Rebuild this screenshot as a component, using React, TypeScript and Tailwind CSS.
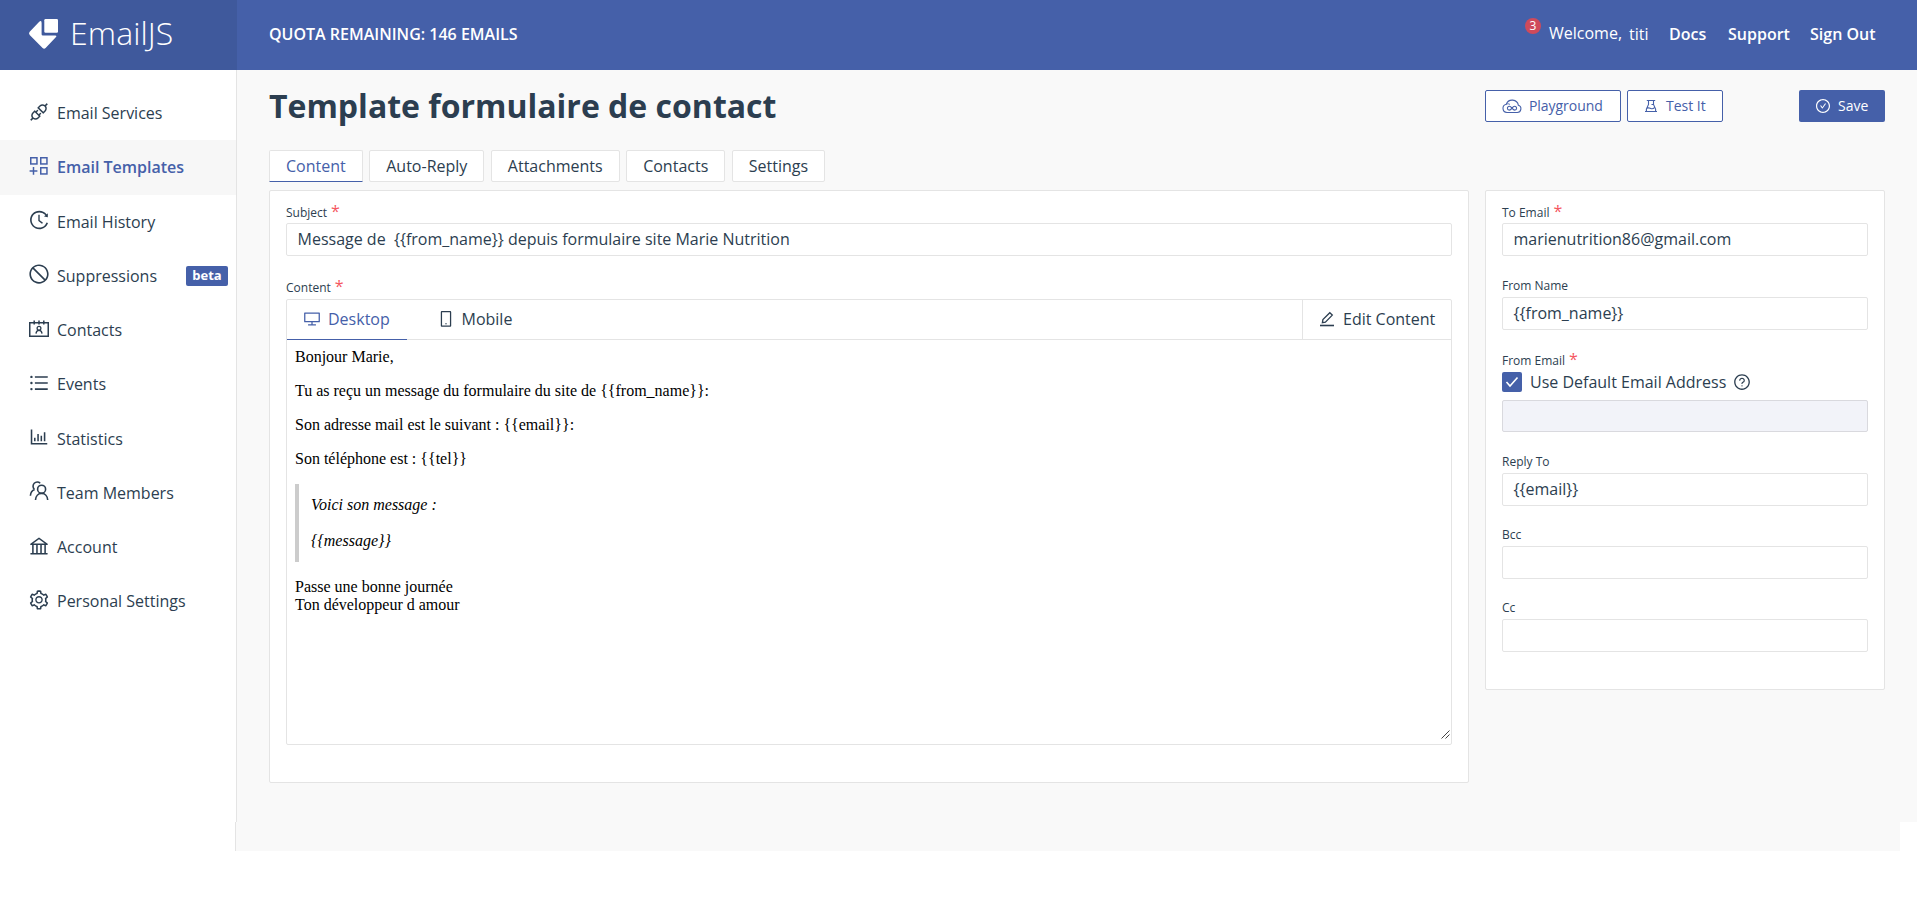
import type { ReactNode } from "react";
import {
  AiOutlineApi,
  AiOutlineBank,
  AiOutlineBarChart,
  AiOutlineCheckCircle,
  AiOutlineDesktop,
  AiOutlineHistory,
  AiOutlineMobile,
  AiOutlineQuestionCircle,
  AiOutlineSetting,
  AiOutlineStop,
  AiOutlineUnorderedList,
} from "react-icons/ai";

function TemplatesIcon() {
  return (
    <svg viewBox="0 0 22 22" width="22" height="22" fill="none" stroke="currentColor" strokeWidth="1.5">
      <rect x="2.75" y="2.75" width="6.2" height="6.2" />
      <rect x="12.75" y="2.75" width="6.2" height="6.2" />
      <rect x="12.75" y="12.75" width="6.2" height="6.2" />
      <path d="M5.5 12v7.8M1.6 15.9h7.8" />
    </svg>
  );
}

function ContactsIcon() {
  return (
    <svg viewBox="0 0 22 22" width="22" height="22" fill="none" stroke="currentColor" strokeWidth="1.5">
      <path d="M1.75 4.75h18.5v13.5H1.75z" />
      <path d="M6.2 2.5v4M11 2.5v4M15.8 2.5v4" />
      <circle cx="11" cy="10.3" r="1.9" strokeWidth="1.3" />
      <path d="M8 15.6c.1-2.1 1.3-3.3 3-3.3s2.9 1.2 3 3.3" strokeWidth="1.3" />
    </svg>
  );
}

function TeamIcon() {
  return (
    <svg viewBox="0 0 22 22" width="22" height="22" fill="none" stroke="currentColor" strokeWidth="1.6">
      <circle cx="13.6" cy="9.2" r="4" />
      <path d="M7.5 20c.2-4 2.7-6.6 6.1-6.6s5.9 2.6 6.1 6.6" />
      <path d="M12.2 3.2A4 4 0 1 0 6.3 9.2M2.4 15.8c.2-3.4 1.500-5.500 4.300-6.400" />
    </svg>
  );
}

function PlaygroundIcon() {
  return (
    <svg viewBox="0 0 20 16" width="20" height="16" fill="none" stroke="currentColor" strokeWidth="1.1">
      <path d="M5 14.500h10.200a3.700 3.700 0 0 0 1.200-7.200A6.300 6.300 0 0 0 4.300 6.200 4.200 4.200 0 0 0 5 14.500z" />
      <path d="M4.300 6.200C5.500 5.600 7 5.700 8 6.500" strokeWidth=".9" />
      <path d="M10 10.100c-1-1.300-1.800-1.800-2.700-1.800a1.900 1.900 0 0 0 0 3.800c.9 0 1.700-.6 2.700-2s1.800-1.800 2.700-1.800a1.900 1.900 0 0 1 0 3.800c-.9 0-1.700-.7-2.700-2z" />
    </svg>
  );
}

function FlaskIcon() {
  return (
    <svg viewBox="0 0 14 14" width="14" height="14" fill="none" stroke="currentColor" strokeWidth="1.1">
      <path d="M2.800 1.500h8.400M4.500 1.500v4L2.400 10v2.500M9.500 1.500v4L11.600 10v2.500M1 12.500h12M3.200 9.200c1.500-.9 2.400-.2 3.600.3s2.600.2 3.900-1.100M7.500 5.500h2" />
    </svg>
  );
}

function PenIcon() {
  return (
    <svg viewBox="0 0 16 16" width="16" height="16" fill="none" stroke="currentColor" strokeWidth="1.3">
      <path d="M1 14.500h14" strokeWidth="1.6" />
      <path d="M3.400 11.600l.5-3L10.800 1.700l2.500 2.400-6.900 7z" />
    </svg>
  );
}

function Logo() {
  return (
    <svg viewBox="0 0 30 32" width="30" height="32" fill="#fff">
      <path d="M17.500 1h11.300q1.200 0 1.200 1.200v11.300q0 1.200-1.200 1.200H17.500q-1.200 0-1.200-1.200V2.200q0-1.200 1.200-1.200z" />
      <path d="M13.600 5V16.200q0 1.300 1.300 1.300H27.400q1.800 0 .6 1.500L17.600 30q-1.500 1.400-3 0L1.700 17q-1.400-1.600 0-3.200L11 4q2.600-2.200 2.600 1z" />
    </svg>
  );
}

const navItems: { label: string; icon: ReactNode; active?: boolean; badge?: string }[] = [
  { label: "Email Services", icon: <AiOutlineApi size={22} /> },
  { label: "Email Templates", icon: <TemplatesIcon />, active: true },
  { label: "Email History", icon: <AiOutlineHistory size={22} /> },
  { label: "Suppressions", icon: <AiOutlineStop size={22} />, badge: "beta" },
  { label: "Contacts", icon: <ContactsIcon /> },
  { label: "Events", icon: <AiOutlineUnorderedList size={22} /> },
  { label: "Statistics", icon: <AiOutlineBarChart size={22} /> },
  { label: "Team Members", icon: <TeamIcon /> },
  { label: "Account", icon: <AiOutlineBank size={22} /> },
  { label: "Personal Settings", icon: <AiOutlineSetting size={22} /> },
];

const tabs = ["Content", "Auto-Reply", "Attachments", "Contacts", "Settings"];

function Label({ text, required }: { text: string; required?: boolean }) {
  return (
    <div className="flex h-[22px] text-[12px]">
      <span className={required ? "leading-6" : "leading-[22px]"}>{text}</span>
      {required && <span className="-mt-[1px] ml-1 text-[16px] leading-[22px] text-[#f5575f]">*</span>}
    </div>
  );
}

function TextBox({ value, disabled }: { value?: string; disabled?: boolean }) {
  return (
    <div
      className={
        disabled
          ? "h-8 rounded-[2px] border border-[#d9d9de] bg-[#f2f3f9]"
          : "h-[33px] rounded-[2px] border border-[#e4e4e4] bg-white px-[10.5px] text-[16px] leading-[31px] whitespace-pre"
      }
    >
      {value}
    </div>
  );
}

function Header() {
  return (
    <header className="flex h-[70px] shrink-0 bg-[#4560a9] text-white">
      <div className="flex w-[237px] bg-[#3f599c] pt-[18px] pl-7">
        <Logo />
        <span className="-mt-[7px] ml-3 text-[32px] leading-[44px] font-light tracking-[0.1px]">EmailJS</span>
      </div>
      <div className="flex flex-1 items-center pr-[42px] pb-[2px] pl-8 text-[16px]">
        <span className="flex-1 font-semibold">QUOTA REMAINING: 146 EMAILS</span>
        <span className="mr-2 mb-4 flex h-4 w-4 items-center justify-center rounded-full bg-[#cf4a5b] text-[12px] leading-none">
          3
        </span>
        <span className="mb-0.5 w-[80px]">Welcome,</span>
        <span className="w-[40px]">titi</span>
        <span className="w-[59px] font-semibold">Docs</span>
        <span className="w-[82px] font-semibold">Support</span>
        <span className="w-[65px] font-semibold whitespace-nowrap">Sign Out</span>
      </div>
    </header>
  );
}

function Sidebar() {
  return (
    <nav className="h-[752px] w-[237px] shrink-0 border-r border-[#e4e4e4] bg-white pt-4">
      {navItems.map((item) => (
        <div
          key={item.label}
          className={
            item.active
              ? "flex h-[54.25px] items-center bg-[#f7f7f7] pl-7 font-semibold text-[#4560a9]"
              : "flex h-[54.25px] items-center pl-7"
          }
        >
          <span className="mb-[3px]">{item.icon}</span>
          <span className="ml-[7px] flex-1">{item.label}</span>
          {item.badge && (
            <span className="mr-2 h-5 w-[42px] rounded-[2px] bg-[#4560a9] text-center text-[13px] leading-[19px] font-bold text-white">
              {item.badge}
            </span>
          )}
        </div>
      ))}
    </nav>
  );
}

function TitleBar() {
  return (
    <div className="flex h-[80px] pt-5 text-[14px] leading-[30px] text-[#4560a9]">
      <h1 className="-mt-[6px] flex-1 text-[32px] leading-[44px] font-bold text-[#2c3e50]">
        Template formulaire de contact
      </h1>
      <button className="mr-1.5 flex h-8 w-[136px] items-center rounded-[2px] border border-[#4560a9] bg-white pb-px pl-4">
        <PlaygroundIcon />
        <span className="ml-[7px] tracking-[-0.05px]">Playground</span>
      </button>
      <button className="mr-[76px] flex h-8 w-[96px] items-center rounded-[2px] border border-[#4560a9] bg-white pb-px pl-4">
        <FlaskIcon />
        <span className="ml-2">Test It</span>
      </button>
      <button className="flex h-8 w-[86px] items-center rounded-[2px] bg-[#4560a9] pb-px pl-4 text-white">
        <AiOutlineCheckCircle size={16} />
        <span className="ml-[7px]">Save</span>
      </button>
    </div>
  );
}

function Preview() {
  return (
    <div className="relative h-[404px] px-2 pt-2 font-['Liberation_Serif',serif] text-[16px] leading-[18px] text-black">
      <p className="mb-4">Bonjour Marie,</p>
      <p className="mb-4">Tu as reçu un message du formulaire du site de {"{{from_name}}"}:</p>
      <p className="mb-4">Son adresse mail est le suivant : {"{{email}}"}:</p>
      <p className="mb-4">Son téléphone est : {"{{tel}}"}</p>
      <blockquote className="mb-4 h-[78px] border-l-4 border-[#ccc] pt-3 pl-3 italic">
        <p className="mb-[18px]">Voici son message :</p>
        <p>{"{{message}}"}</p>
      </blockquote>
      <p>
        Passe une bonne journée
        <br />
        Ton développeur d amour
      </p>
      <svg className="absolute right-px bottom-[5px]" width="9" height="9" stroke="#444" strokeWidth="1">
        <path d="M.5 8.500l8-8M4.500 8.500l4-4" />
      </svg>
    </div>
  );
}

function ContentCard() {
  return (
    <section className="h-[593px] w-[1200px] rounded-[2px] border border-[#e4e4e4] bg-white px-4 pt-[10px]">
      <Label text="Subject" required />
      <TextBox value={"Message de  {{from_name}} depuis formulaire site Marie Nutrition"} />
      <div className="h-[20px]" />
      <Label text="Content" required />
      <div className="mt-[1px] h-[446px] rounded-[2px] border border-[#e4e4e4]">
        <div className="flex h-[40px] border-b border-[#e4e4e4] leading-[38px]">
          <div className="flex h-10 w-[120px] items-center border-b border-[#4560a9] pb-px pl-4 text-[#4560a9]">
            <AiOutlineDesktop size={18} />
            <span className="ml-[7px]">Desktop</span>
          </div>
          <div className="flex flex-1 items-center pb-px pl-[30px]">
            <AiOutlineMobile size={18} />
            <span className="ml-[6.5px]">Mobile</span>
          </div>
          <div className="flex w-[149px] items-center border-l border-[#e4e4e4] pb-px pl-4">
            <PenIcon />
            <span className="ml-2">Edit Content</span>
          </div>
        </div>
        <Preview />
      </div>
    </section>
  );
}

function RecipientCard() {
  return (
    <section className="h-[500px] w-[400px] rounded-[2px] border border-[#e4e4e4] bg-white px-4 pt-[10px]">
      <div className="h-[74px]">
        <Label text="To Email" required />
        <TextBox value="marienutrition86@gmail.com" />
      </div>
      <div className="h-[74px]">
        <Label text="From Name" />
        <TextBox value="{{from_name}}" />
      </div>
      <div className="h-[102px]">
        <Label text="From Email" required />
        <div className="mb-[7px] flex h-[22px] items-center">
          <span className="flex h-5 w-5 items-center justify-center rounded-[2px] bg-[#4560a9]">
            <svg width="14" height="12" viewBox="0 0 14 12" fill="none" stroke="#fff" strokeWidth="1.6">
              <path d="M1.500 6l3.500 4L12.500 1.500" />
            </svg>
          </span>
          <span className="mr-[7px] ml-2">Use Default Email Address</span>
          <AiOutlineQuestionCircle size={18} />
        </div>
        <TextBox disabled />
      </div>
      <div className="h-[73px]">
        <Label text="Reply To" />
        <TextBox value="{{email}}" />
      </div>
      <div className="h-[73px]">
        <Label text="Bcc" />
        <TextBox />
      </div>
      <Label text="Cc" />
      <TextBox />
    </section>
  );
}

export default function App() {
  return (
    <div className="flex h-[921px] w-[1917px] flex-col overflow-hidden bg-white font-['Open_Sans',sans-serif] text-[16px] text-[#2c3e50]">
      <Header />
      <div className="flex h-[752px]">
        <Sidebar />
        <main className="flex-1 bg-[#f9f9f9] pr-8 pl-8">
          <TitleBar />
          <div className="flex h-10 gap-[6.5px]">
            {tabs.map((tab, index) => (
              <div
                key={tab}
                className={
                  index === 0
                    ? "h-8 rounded-t-[2px] border border-[#e4e4e4] border-b-[#4560a9] bg-white px-4 leading-[30px] text-[#4560a9]"
                    : "h-8 rounded-[2px] border border-[#e4e4e4] bg-white px-4 leading-[30px]"
                }
              >
                {tab}
              </div>
            ))}
          </div>
          <div className="flex items-start gap-4">
            <ContentCard />
            <RecipientCard />
          </div>
        </main>
      </div>
      <div className="ml-[235px] h-[29px] w-[1665px] border-l border-[#e4e4e4] bg-[#f9f9f9]" />
    </div>
  );
}
